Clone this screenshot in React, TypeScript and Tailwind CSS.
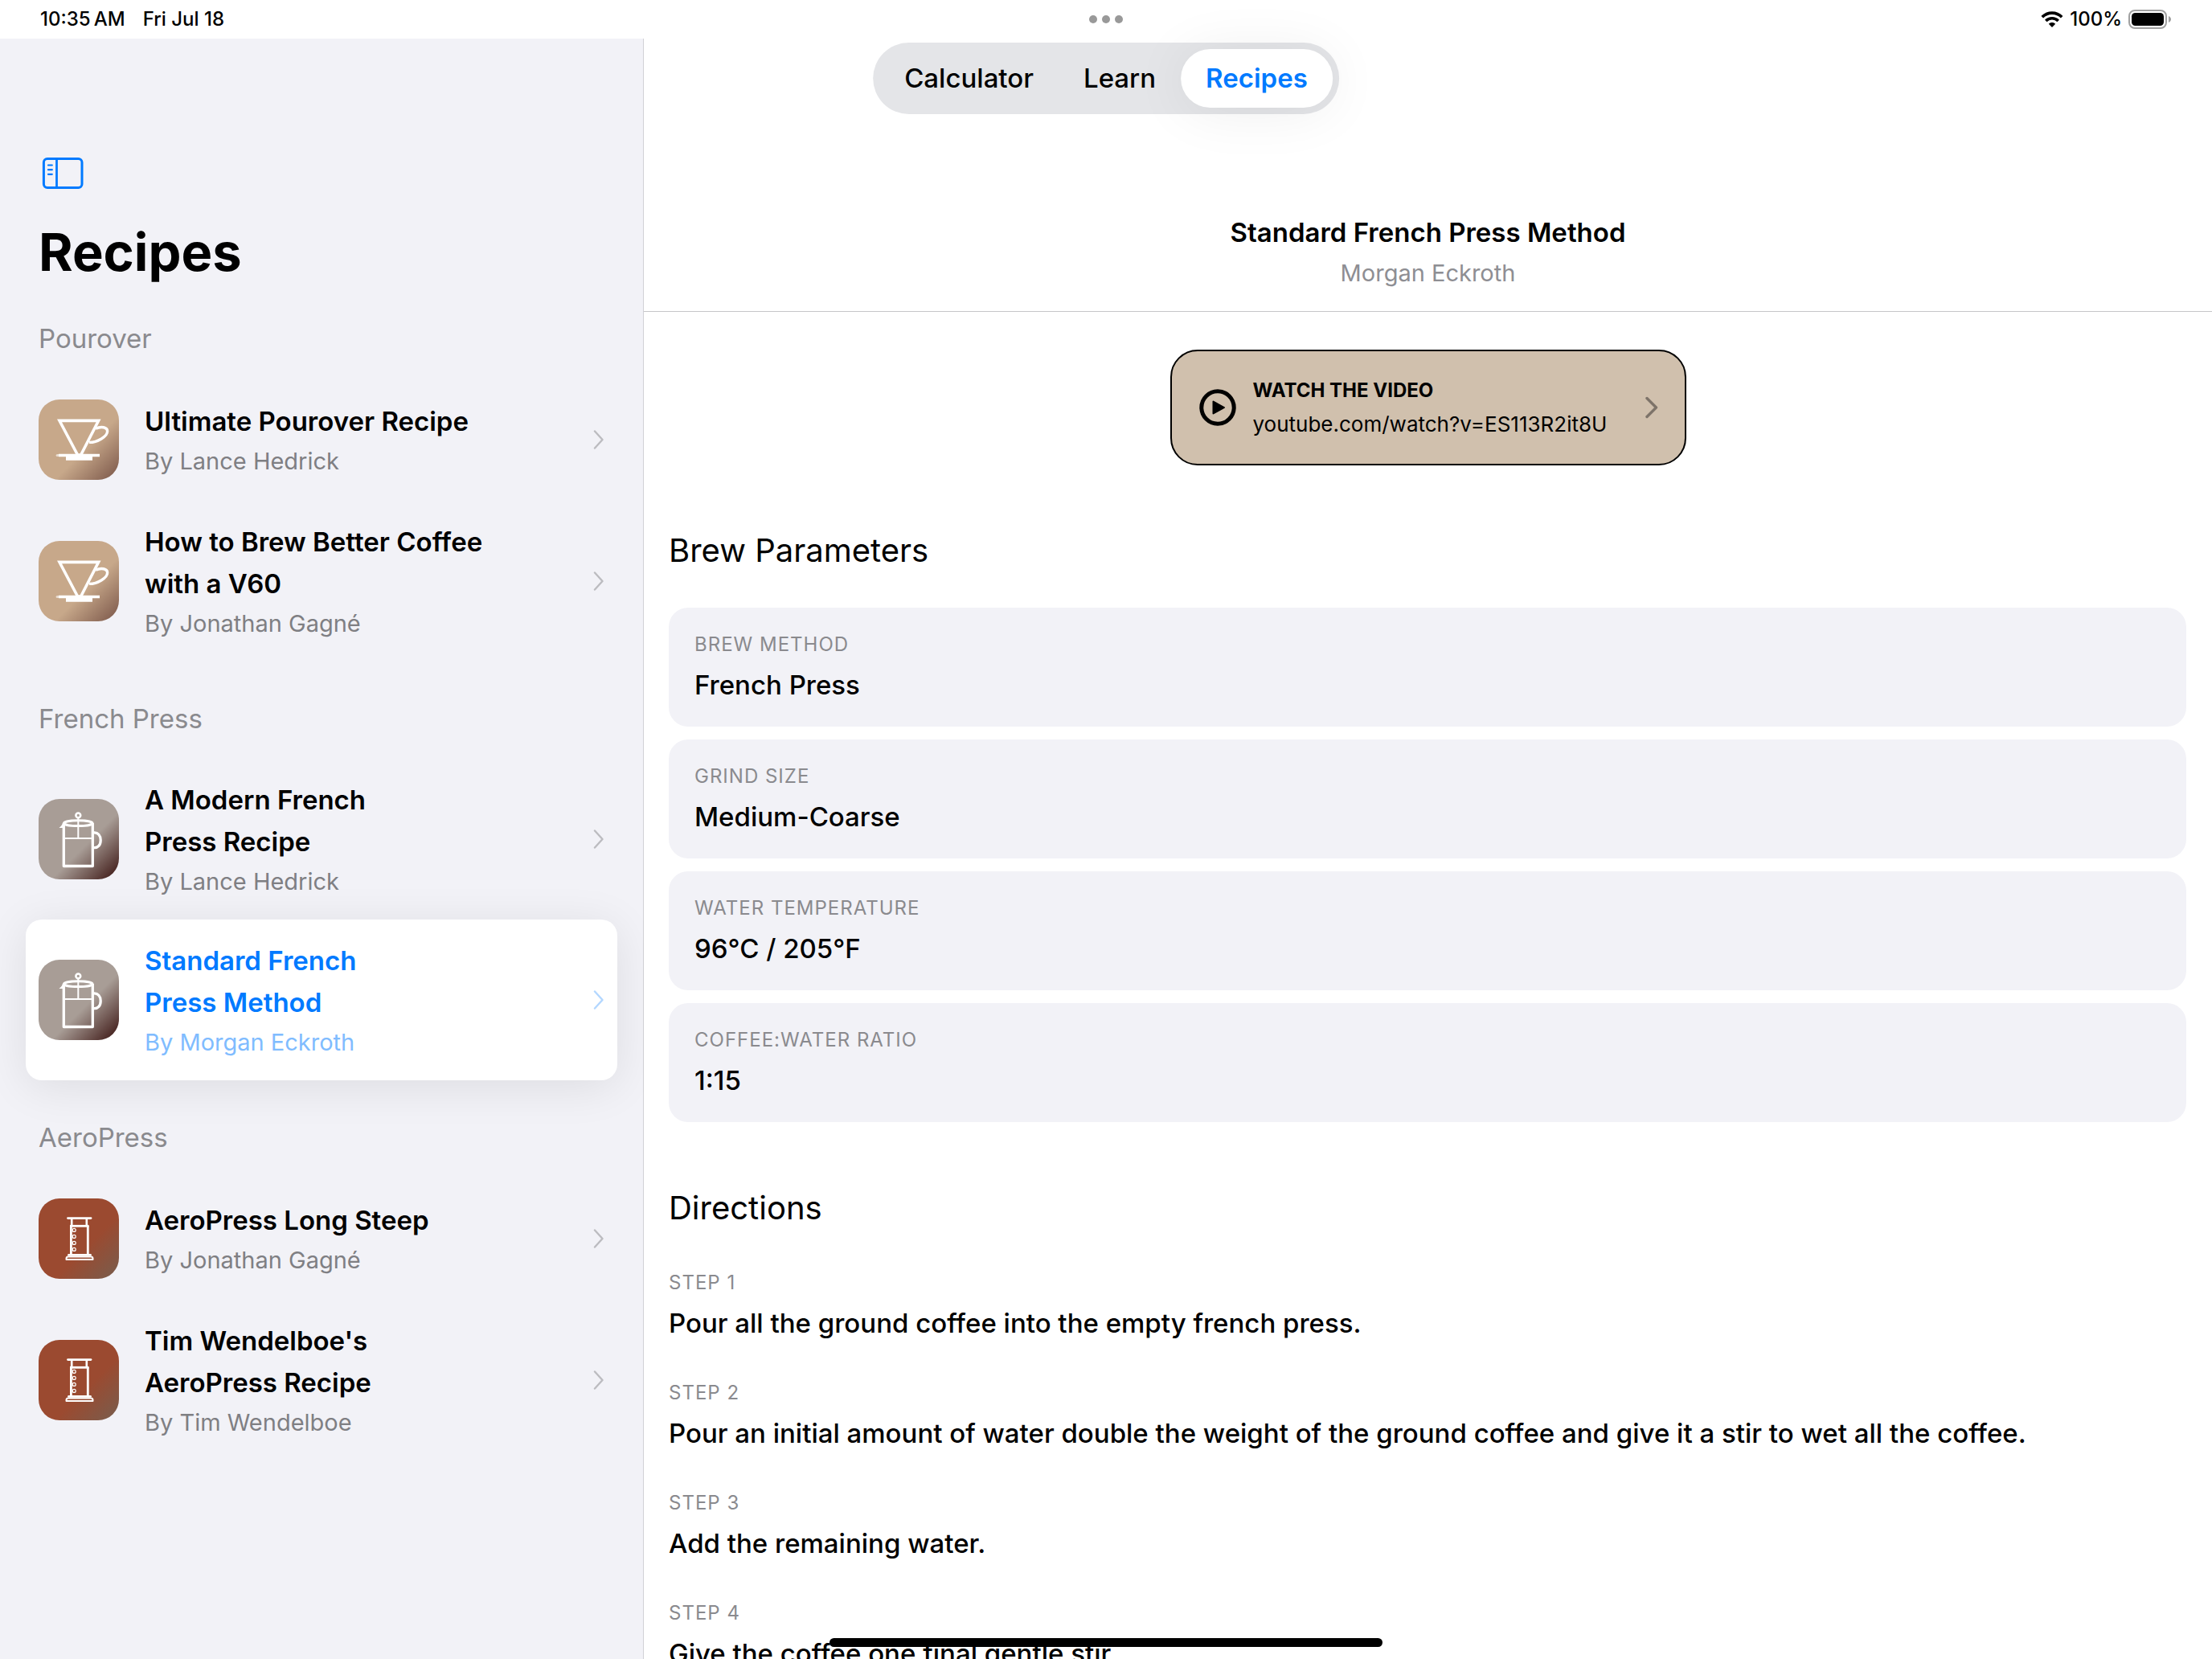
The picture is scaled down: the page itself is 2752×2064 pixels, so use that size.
import React from "react";

type Method = "pourover" | "french" | "aero";

type Recipe = {
  lines: string[];
  author: string;
  method: Method;
  selected?: boolean;
};

const sections: { title: string; recipes: Recipe[] }[] = [
  {
    title: "Pourover",
    recipes: [
      { lines: ["Ultimate Pourover Recipe"], author: "Lance Hedrick", method: "pourover" },
      { lines: ["How to Brew Better Coffee", "with a V60"], author: "Jonathan Gagné", method: "pourover" },
    ],
  },
  {
    title: "French Press",
    recipes: [
      { lines: ["A Modern French", "Press Recipe"], author: "Lance Hedrick", method: "french" },
      { lines: ["Standard French", "Press Method"], author: "Morgan Eckroth", method: "french", selected: true },
    ],
  },
  {
    title: "AeroPress",
    recipes: [
      { lines: ["AeroPress Long Steep"], author: "Jonathan Gagné", method: "aero" },
      { lines: ["Tim Wendelboe's", "AeroPress Recipe"], author: "Tim Wendelboe", method: "aero" },
    ],
  },
];

const parameters = [
  { label: "BREW METHOD", value: "French Press" },
  { label: "GRIND SIZE", value: "Medium-Coarse" },
  { label: "WATER TEMPERATURE", value: "96°C / 205°F" },
  { label: "COFFEE:WATER RATIO", value: "1:15" },
];

const steps = [
  "Pour all the ground coffee into the empty french press.",
  "Pour an initial amount of water double the weight of the ground coffee and give it a stir to wet all the coffee.",
  "Add the remaining water.",
  "Give the coffee one final gentle stir.",
];

const tileBackground: Record<Method, string> = {
  pourover: "bg-[linear-gradient(135deg,#c7a88a_0%,#c7a88a_60%,#835f50_95%)]",
  french: "bg-[linear-gradient(135deg,#a89d96_0%,#a89d96_58%,#45211e_95%)]",
  aero: "bg-[linear-gradient(135deg,#9b4a30_0%,#9b4a30_60%,#7c5b4a_95%)]",
};

function PouroverDrawing() {
  return (
    <svg viewBox="0 0 100 100" className="size-full" fill="none" stroke="#fff" aria-hidden="true">
      <path d="M26 26.4H74.6L52.6 69H48.6Z" strokeWidth="3.6" />
      <path d="M71 36.2C78 33 85.6 34.5 85.6 39.5C85.6 46 73 53.5 63 53.4" strokeWidth="3.4" />
      <path d="M25 69.5H76" strokeWidth="3.6" />
      <path d="M23.2 69.5H30" strokeWidth="3.2" strokeLinecap="round" strokeOpacity="0.6" />
      <path d="M34 69H67V75.8H34Z" fill="#fff" stroke="none" />
    </svg>
  );
}

function FrenchPressDrawing() {
  return (
    <svg viewBox="0 0 100 100" className="size-full" fill="none" stroke="#fff" aria-hidden="true">
      <circle cx="49.3" cy="20.4" r="2.9" strokeWidth="2.6" />
      <path d="M49.3 23V49" strokeWidth="2" />
      <ellipse cx="49.3" cy="30.2" rx="17.8" ry="3.4" strokeWidth="3" />
      <path d="M31.3 30V83.5H67.3V30" strokeWidth="3.3" strokeLinejoin="round" />
      <path d="M31 49H67" strokeWidth="1.8" />
      <path d="M31.5 28C29.5 31 29 33.5 25.5 36H31.5Z" fill="#fff" stroke="none" />
      <path d="M68 42C74 41 77.2 46 77.2 51.2C77.2 57 74 61.5 68 60.6" strokeWidth="3.3" />
    </svg>
  );
}

function AeroPressDrawing() {
  return (
    <svg viewBox="0 0 100 100" className="size-full" fill="none" stroke="#fff" aria-hidden="true">
      <path d="M36.5 24.6H65" strokeWidth="2.8" strokeLinecap="round" />
      <path d="M41.2 25V33M59.8 25V33" strokeWidth="2.6" />
      <path d="M39 34.3H62.5" strokeWidth="2.8" />
      <path d="M40.4 34V69.5M61.3 34V69.5" strokeWidth="2.8" />
      {[39.4, 47.4, 55.4, 63.4].map((y) => (
        <circle key={y} cx="44.2" cy={y} r="2" strokeWidth="1.2" />
      ))}
      <path d="M37.5 70.3H64.5" strokeWidth="2.8" strokeLinecap="round" />
      <path d="M36.5 72.5H65.5Q67.5 72.5 67.5 75V76H34.5V75Q34.5 72.5 36.5 72.5Z" strokeWidth="2" strokeLinejoin="round" />
    </svg>
  );
}

const drawings: Record<Method, () => React.JSX.Element> = {
  pourover: PouroverDrawing,
  french: FrenchPressDrawing,
  aero: AeroPressDrawing,
};

function RecipeRow({ recipe }: { recipe: Recipe }) {
  const Drawing = drawings[recipe.method];
  const selected = recipe.selected;
  return (
    <button
      type="button"
      aria-current={selected ? "true" : undefined}
      className={`flex min-h-[152px] w-full items-center rounded-[20px] px-4 py-[23px] text-left ${
        selected ? "bg-white shadow-[0_8px_56px_rgba(0,0,0,0.09)]" : ""
      }`}
    >
      <span className={`size-[100px] shrink-0 rounded-[26px] ${tileBackground[recipe.method]}`}>
        <Drawing />
      </span>
      <span className="ml-8 flex grow flex-col pt-0.5">
        <span className={`text-[33px] leading-[52px] font-semibold ${selected ? "text-[#007aff]" : "text-black"}`}>
          {recipe.lines.map((line) => (
            <span key={line} className="block">
              {line}
            </span>
          ))}
        </span>
        <span className={`text-[29px] leading-[48px] ${selected ? "text-[#80bcff]" : "text-[#7f7f83]"}`}>
          By {recipe.author}
        </span>
      </span>
      <svg viewBox="0 0 14 24" className="h-6 w-3.5" fill="none" aria-hidden="true">
        <path
          d="M2 1.5L11.5 12L2 22.5"
          stroke={selected ? "#b3d7ff" : "#bcbcc0"}
          strokeWidth="2.4"
          strokeLinecap="round"
          strokeLinejoin="round"
        />
      </svg>
    </button>
  );
}

function StatusBar() {
  return (
    <header className="relative flex h-12 shrink-0 items-center justify-between bg-white px-[50px] text-[24px] font-medium text-black">
      <div className="flex gap-[22px]">
        <span>10:35&#8239;AM</span>
        <span>Fri Jul 18</span>
      </div>
      <div className="absolute inset-x-0 flex justify-center gap-1.5">
        <span className="size-2.5 rounded-full bg-[#999]" />
        <span className="size-2.5 rounded-full bg-[#999]" />
        <span className="size-2.5 rounded-full bg-[#999]" />
      </div>
      <div className="flex items-center">
        <svg viewBox="0 0 28 20" className="mr-2 h-5 w-7" fill="none" stroke="#000" aria-label="Wi-Fi">
          <path d="M1.8 7.3C8.5 0.4 19.5 0.4 26.2 7.3" strokeWidth="3.6" />
          <path d="M6.3 11.9C10.5 7.7 17.5 7.7 21.7 11.9" strokeWidth="3.6" />
          <path d="M14 20L9.8 15.7C12.1 13.4 15.9 13.4 18.2 15.7Z" fill="#000" stroke="none" />
        </svg>
        <span>100%</span>
        <svg viewBox="0 0 54 24" className="ml-2 h-6 w-[54px]" aria-label="Battery full">
          <rect x="1" y="1" width="46" height="22" rx="7" fill="none" stroke="#a0a0a0" strokeWidth="2" />
          <rect x="4" y="4" width="40" height="16" rx="4.5" fill="#000" />
          <path d="M50 8C52 8.8 53 10.3 53 12C53 13.7 52 15.2 50 16Z" fill="#a0a0a0" />
        </svg>
      </div>
    </header>
  );
}

function Sidebar() {
  return (
    <aside className="flex w-[801px] shrink-0 flex-col border-r border-[#d1d1d6] bg-[#f2f2f7] px-8">
      <button type="button" aria-label="Toggle sidebar" className="mt-[147px] ml-5 h-10 w-[52px]">
        <svg viewBox="0 0 52 40" className="size-full" fill="none" stroke="#007aff" aria-hidden="true">
          <rect x="2.4" y="2.4" width="47.6" height="36" rx="4.5" strokeWidth="3" />
          <path d="M18.5 2V39" strokeWidth="2.8" />
          <path d="M8 10.5H12.8M8 16.2H12.8M8 21.8H12.8" strokeWidth="2.2" strokeLinecap="round" />
        </svg>
      </button>
      <h1 className="mt-[43px] ml-4 text-[65px] leading-[72px] font-bold text-black">Recipes</h1>
      <nav aria-label="Recipes">
        {sections.map((section) => (
          <section key={section.title}>
            <h2 className="pt-[45px] pb-6 pl-4 text-[33px] leading-[52px] text-[#8a8a8e]">{section.title}</h2>
            {section.recipes.map((recipe) => (
              <RecipeRow key={recipe.lines[0]} recipe={recipe} />
            ))}
          </section>
        ))}
      </nav>
    </aside>
  );
}

function Tabs() {
  return (
    <nav
      aria-label="Main"
      className="absolute top-[53px] left-1/2 flex h-[89px] -translate-x-1/2 items-center rounded-full bg-[#e4e5e8] p-2 text-[33px] font-medium text-black"
    >
      <button type="button" className="h-full px-[31px]">
        Calculator
      </button>
      <button type="button" className="h-full px-[31px]">
        Learn
      </button>
      <button
        type="button"
        aria-current="page"
        className="h-full rounded-full bg-white px-[31px] font-semibold text-[#007aff] shadow-[0_4px_70px_rgba(0,0,0,0.07)]"
      >
        Recipes
      </button>
    </nav>
  );
}

function VideoLink() {
  return (
    <a
      href="https://youtube.com/watch?v=ES113R2it8U"
      className="mx-auto mt-[47px] flex h-36 w-[642px] shrink-0 items-center rounded-[34px] border-2 border-black bg-[#d0c0ad] pr-8 pl-[34px] text-black"
    >
      <svg viewBox="0 0 46 46" className="size-[46px] shrink-0" aria-hidden="true">
        <circle cx="23" cy="23" r="20.2" fill="none" stroke="#000" strokeWidth="5" />
        <path d="M17.5 15.5V30.5L31 23Z" fill="#000" stroke="#000" strokeWidth="2" strokeLinejoin="round" />
      </svg>
      <span className="ml-[21px] flex grow flex-col">
        <span className="text-[24px] leading-[42px] font-bold">WATCH THE VIDEO</span>
        <span className="text-[26px] leading-[42px]">youtube.com/watch?v=ES113R2it8U</span>
      </span>
      <svg viewBox="0 0 18 28" className="h-7 w-[18px]" fill="none" aria-hidden="true">
        <path d="M3 2.5L14.5 14L3 25.5" stroke="#7d7369" strokeWidth="3.4" strokeLinecap="round" strokeLinejoin="round" />
      </svg>
    </a>
  );
}

function Detail() {
  return (
    <main className="flex min-w-0 grow flex-col bg-white text-black">
      <div className="shrink-0 border-b border-[#c6c6c8] pt-[215px] pb-[22px] text-center">
        <h2 className="text-[33px] leading-[52px] font-semibold">Standard French Press Method</h2>
        <p className="text-[29px] leading-[50px] text-[#8e8e93]">Morgan Eckroth</p>
      </div>
      <VideoLink />
      <div className="pr-8 pl-[31px]">
        <h3 className="mt-[78px] text-[40px] leading-[56px]">Brew Parameters</h3>
        <dl className="mt-[43px] flex flex-col gap-4">
          {parameters.map((item) => (
            <div key={item.label} className="flex flex-col gap-2 rounded-3xl bg-[#f2f2f7] px-8 pt-[30px] pb-[26px]">
              <dt className="text-[24px] leading-8 tracking-[1px] text-[#8a8a8e]">{item.label}</dt>
              <dd className="text-[33px] leading-[52px] font-medium">{item.value}</dd>
            </div>
          ))}
        </dl>
        <h3 className="mt-[79px] text-[40px] leading-[56px]">Directions</h3>
        <ol className="mt-[49px] flex flex-col gap-[45px]">
          {steps.map((text, index) => (
            <li key={text} className="flex flex-col gap-2">
              <span className="text-[24px] leading-8 tracking-[1px] text-[#8a8a8e]">STEP {index + 1}</span>
              <span className="text-[33px] leading-[52px] font-medium">{text}</span>
            </li>
          ))}
        </ol>
      </div>
    </main>
  );
}

export default function App() {
  return (
    <div className="relative flex h-screen flex-col overflow-hidden bg-white font-['Inter',sans-serif]">
      <StatusBar />
      <div className="flex min-h-0 grow">
        <Sidebar />
        <Detail />
      </div>
      <Tabs />
      <div className="absolute bottom-[15px] left-1/2 h-[11px] w-1/4 -translate-x-1/2 rounded-full bg-black" />
    </div>
  );
}
